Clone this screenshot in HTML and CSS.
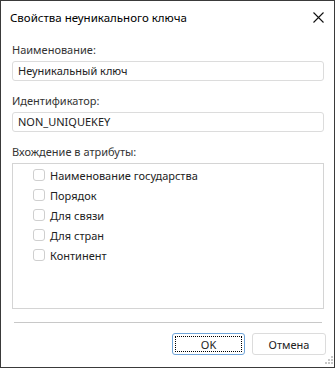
FILE: index.html
```html
<!DOCTYPE html>
<html lang="ru">
<head>
<meta charset="utf-8">
<link rel="stylesheet" href="styles.css">
</head>
<body>
<div class="window">
  <div class="titlebar">
    <span class="title">Свойства неуникального ключа</span>
    <svg class="close" width="11" height="11" viewBox="0 0 11 11"><path d="M0.5 0.5 L10.5 10.5 M10.5 0.5 L0.5 10.5" stroke="#111" stroke-width="1.1" fill="none"/></svg>
  </div>
  <div class="content">
    <div class="label">Наименование:</div>
    <div class="input">Неуникальный ключ</div>
    <div class="label second">Идентификатор:</div>
    <div class="input">NON_UNIQUEKEY</div>
    <div class="label second">Вхождение в атрибуты:</div>
    <div class="list">
      <div class="row"><span class="cb"></span><span>Наименование государства</span></div>
      <div class="row"><span class="cb"></span><span>Порядок</span></div>
      <div class="row"><span class="cb"></span><span>Для связи</span></div>
      <div class="row"><span class="cb"></span><span>Для стран</span></div>
      <div class="row"><span class="cb"></span><span>Континент</span></div>
    </div>
    <div class="sep"></div>
  </div>
  <div class="buttons">
    <div class="btn ok"><span class="focus">OK</span></div>
    <div class="btn">Отмена</div>
  </div>
  <svg class="grip" width="10" height="10" viewBox="0 0 10 10">
    <rect x="8" y="0" width="2" height="2" fill="#c8c8c8"/>
    <rect x="5" y="3" width="2" height="2" fill="#c8c8c8"/>
    <rect x="8" y="3" width="2" height="2" fill="#c8c8c8"/>
    <rect x="2" y="6" width="2" height="2" fill="#c8c8c8"/>
    <rect x="5" y="6" width="2" height="2" fill="#c8c8c8"/>
    <rect x="8" y="6" width="2" height="2" fill="#c8c8c8"/>
  </svg>
</div>
</body>
</html>
```
FILE: styles.css
```css
* { box-sizing: border-box; }
html, body { margin: 0; padding: 0; background: #fff; }
body { font-family: "Noto Sans", "Open Sans", sans-serif; color: #1a1a1a; }
.window {
  position: relative;
  width: 335px;
  height: 368px;
  border: 1px solid #3a3a3a;
  background: #fff;
  display: flex;
  flex-direction: column;
}
.titlebar {
  height: 33px;
  display: flex;
  align-items: center;
  justify-content: space-between;
  padding: 0 10px 0 9px;
}
.title { font-size: 11.5px; color: #000; }
.close { display: block; margin-top: -1px; }
.content {
  padding: 9px 10px 0 11px;
  display: flex;
  flex-direction: column;
  font-size: 11px;
}
.label { height: 14px; line-height: 14px; margin-bottom: 4px; color: #333; }
.label.second { margin-top: 13px; }
.input {
  height: 20px;
  border: 1px solid #dcdcdc;
  border-radius: 3px;
  padding-left: 5px;
  line-height: 18px;
  color: #222;
}
.list {
  height: 146px;
  border: 1px solid #d4d4d4;
  padding: 1px 0 0 20px;
}
.row {
  height: 20px;
  display: flex;
  align-items: center;
  gap: 5px;
  color: #222;
}
.cb {
  width: 12px;
  height: 12px;
  border: 1px solid #cfcfcf;
  border-radius: 3px;
  background: #fff;
}
.sep {
  margin: 13px 2px 0 2px;
  height: 1px;
  background: #c8c8c8;
}
.buttons {
  display: flex;
  justify-content: flex-end;
  gap: 7px;
  padding: 10px 8px 0 0;
}
.btn {
  width: 74px;
  height: 22px;
  border: 1px solid #dcdcdc;
  border-radius: 3px;
  display: flex;
  align-items: center;
  justify-content: center;
  font-size: 11px;
  color: #222;
  background: #fff;
}
.btn.ok {
  width: 73px;
  border-color: #6fa4d8;
  padding: 2px;
}
.focus {
  width: 100%;
  height: 100%;
  border: 1px dotted #000;
  display: flex;
  align-items: center;
  justify-content: center;
}
.grip { position: absolute; right: 1px; bottom: 1px; }
```
